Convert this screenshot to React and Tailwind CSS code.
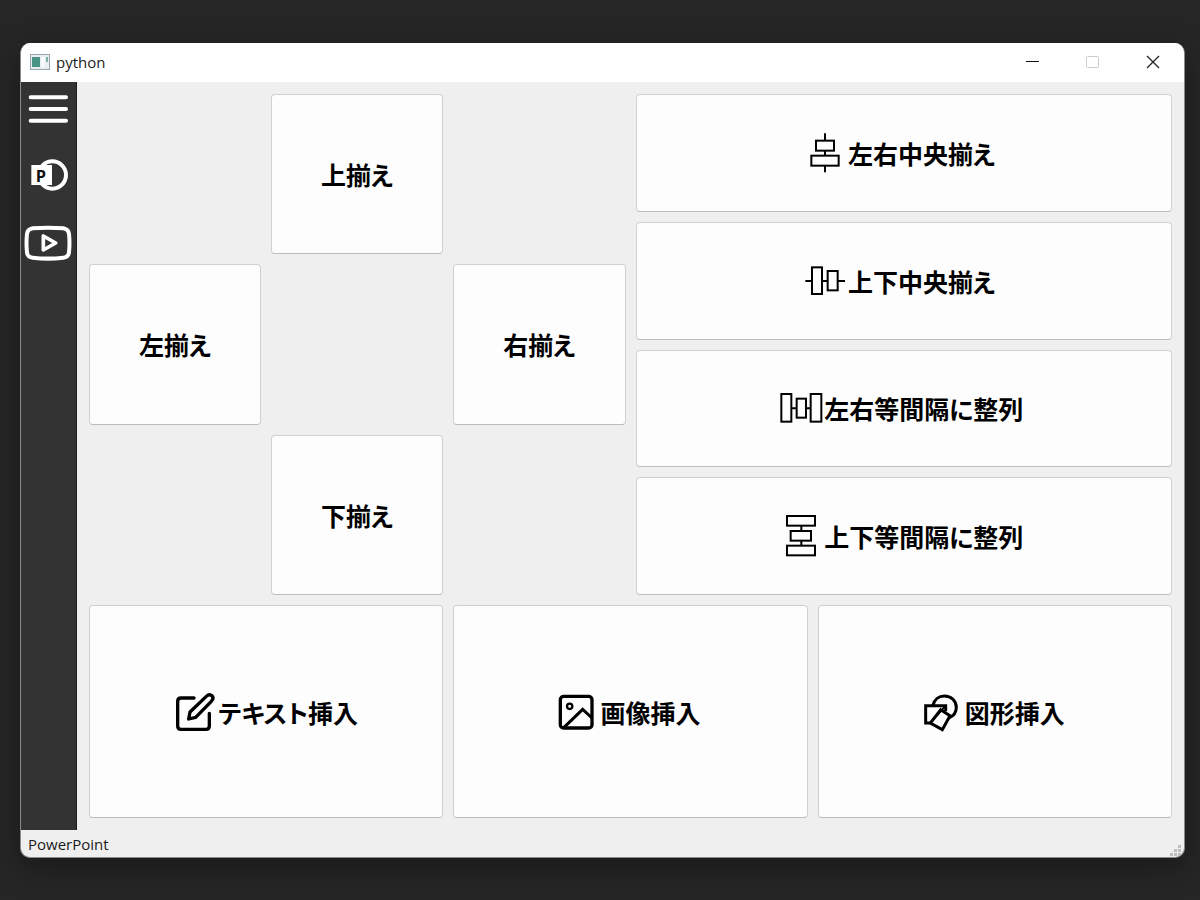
import React from 'react';

const ICON_CLASS = 'size-[42px] shrink-0 overflow-visible';

function AlignCenterHIcon() {
  return (
    <svg className={ICON_CLASS} viewBox="41 36 126 126" fill="none" stroke="#000" strokeWidth="6" aria-hidden="true">
      <path d="M104 40V61M104 92V107M104 137V157" />
      <rect x="77" y="62" width="54" height="30" />
      <rect x="63" y="107" width="82" height="30" />
    </svg>
  );
}

function AlignCenterVIcon() {
  return (
    <svg className={ICON_CLASS} viewBox="44 28 126 126" fill="none" stroke="#000" strokeWidth="6" aria-hidden="true">
      <path d="M48 91H68M98 91H115M145 91H167" />
      <rect x="68" y="50" width="30" height="80" />
      <rect x="115" y="61" width="30" height="58" />
    </svg>
  );
}

function DistributeHIcon() {
  return (
    <svg className={ICON_CLASS} viewBox="28 23 126 126" fill="none" stroke="#000" strokeWidth="6" aria-hidden="true">
      <path d="M62 87H78M106 87H120" />
      <rect x="32" y="44" width="30" height="83" />
      <rect x="78" y="58" width="28" height="57" />
      <rect x="120" y="44" width="32" height="83" />
    </svg>
  );
}

function DistributeVIcon() {
  return (
    <svg className={ICON_CLASS} viewBox="29 30 126 126" fill="none" stroke="#000" strokeWidth="6" aria-hidden="true">
      <path d="M93 62V78M93 107V122" />
      <rect x="50" y="33" width="84" height="29" />
      <rect x="61" y="78" width="61" height="29" />
      <rect x="50" y="122" width="84" height="29" />
    </svg>
  );
}

function EditIcon() {
  return (
    <svg
      className={ICON_CLASS}
      viewBox="34 32 126 126"
      fill="none"
      stroke="#000"
      strokeWidth="10"
      strokeLinecap="round"
      strokeLinejoin="round"
      aria-hidden="true"
    >
      <path d="M94 53H55Q45 53 45 63V137Q45 147 55 147H130Q140 147 140 137V99" />
      <path d="M78 116L82 95L131 48Q140 39 148 46Q155 54 146 63L99 111Z" />
    </svg>
  );
}

function ImageIcon() {
  return (
    <svg className={ICON_CLASS} viewBox="30 31 126 126" fill="none" stroke="#000" strokeWidth="10" aria-hidden="true">
      <rect x="43" y="47" width="95" height="95" rx="10" />
      <circle cx="71" cy="77" r="8" strokeWidth="7" />
      <path d="M54 140L110 86L138 112" strokeWidth="9" />
    </svg>
  );
}

function ShapesIcon() {
  return (
    <svg className={ICON_CLASS} viewBox="30 31 126 126" fill="none" stroke="#000" strokeWidth="9" aria-hidden="true">
      <path d="M66 74C70 56 84 46 100 46C121 46 136 61 136 80C136 95 127 107 113 112" />
      <path d="M62 127H44V75H104V92" />
      <path d="M89 87L117 105L94 147L58 127Z" />
      <path d="M104 75L58 127" strokeWidth="6" />
    </svg>
  );
}

function MenuIcon() {
  return (
    <svg className="h-[46px] w-14" viewBox="63 168 168 138" stroke="#fff" strokeWidth="12" strokeLinecap="round" aria-hidden="true">
      <path d="M92 202H198M92 237H198M92 272H198" />
    </svg>
  );
}

function PowerPointIcon() {
  return (
    <svg className="h-[46px] w-14" viewBox="15 39 168 138" aria-hidden="true">
      <circle cx="109" cy="105" r="41" fill="none" stroke="#fff" strokeWidth="12" />
      <path d="M46 75H108V135H46Z" fill="#fff" />
      <text x="59" y="126" fontSize="49" fontWeight="700" fontFamily="'Open Sans', sans-serif" fill="#111">
        P
      </text>
    </svg>
  );
}

function VideoIcon() {
  return (
    <svg className="h-[46px] w-14" viewBox="15 240 168 138" fill="none" stroke="#fff" strokeLinejoin="round" aria-hidden="true">
      <path
        d="M96 263C118 263 132 264 142 265C153 267 158 273 159 282C161 300 161 318 159 337C158 347 153 352 142 353C118 356 74 356 50 353C39 352 34 347 33 337C31 318 31 300 33 282C34 273 39 267 50 265C60 264 74 263 96 263Z"
        strokeWidth="12"
      />
      <path d="M82 288V330L119 309Z" strokeWidth="11" />
    </svg>
  );
}

function ActionButton({ icon, label, className = '' }) {
  return (
    <button
      type="button"
      className={`flex items-center justify-center gap-[2px] rounded-[4px] border border-[#d0d0d0] border-b-[#bcbcbc] bg-[#fdfdfd] text-[25px] leading-8 font-bold text-black ${className}`}
    >
      {icon}
      <span className="pt-[2px] [font-feature-settings:'palt']">{label}</span>
    </button>
  );
}

function TitleBar() {
  return (
    <header className="flex h-[39px] shrink-0 items-center bg-white pb-[2px] pl-[9px]">
      <svg className="h-4 w-5" viewBox="0 0 20 16" aria-hidden="true">
        <rect x="0.5" y="0.5" width="19" height="15" fill="#e9eef2" stroke="#9aa5ad" />
        <rect x="2" y="3" width="8" height="10" fill="#4a9484" />
        <rect x="11" y="3" width="4" height="10" fill="#f7fafc" />
        <rect x="16" y="3" width="2" height="5" fill="#7fb0a8" />
      </svg>
      <h1 className="flex-1 pl-[6px] text-[15px] leading-5">python</h1>
      <div className="flex h-full pr-px">
        <button type="button" aria-label="Minimize" className="flex w-[60px] items-center justify-center">
          <svg className="size-[14px]" viewBox="0 0 14 14" stroke="#111" aria-hidden="true">
            <path d="M0 6.5H13" />
          </svg>
        </button>
        <button type="button" aria-label="Maximize" disabled className="flex w-[60px] items-center justify-center">
          <svg className="size-[14px]" viewBox="0 0 14 14" fill="none" stroke="#cccccc" aria-hidden="true">
            <rect x="0.5" y="1.5" width="12" height="11" rx="1" />
          </svg>
        </button>
        <button type="button" aria-label="Close" className="flex w-[60px] items-center justify-center">
          <svg className="size-[14px]" viewBox="0 0 14 14" stroke="#222" strokeWidth="1.3" aria-hidden="true">
            <path d="M1 1L13 13M13 1L1 13" />
          </svg>
        </button>
      </div>
    </header>
  );
}

function Sidebar() {
  return (
    <nav className="flex w-14 shrink-0 flex-col gap-[21px] border-r border-[#1c1c1c] bg-[#333333] pt-1">
      <button type="button" aria-label="Menu">
        <MenuIcon />
      </button>
      <button type="button" aria-label="PowerPoint">
        <PowerPointIcon />
      </button>
      <button type="button" aria-label="YouTube">
        <VideoIcon />
      </button>
    </nav>
  );
}

function StatusBar() {
  return (
    <footer className="flex h-[27px] shrink-0 items-center justify-between pl-[7px] pr-[2px] text-[15px] leading-5">
      <span>PowerPoint</span>
      <svg className="size-3 self-end" viewBox="0 0 12 12" fill="#bdbdbd" aria-hidden="true">
        <path d="M8 0h3v3h-3zM4 4h3v3h-3zM8 4h3v3h-3zM0 8h3v3h-3zM4 8h3v3h-3zM8 8h3v3h-3z" />
      </svg>
    </footer>
  );
}

function App() {
  return (
    <div className="flex min-h-screen flex-col bg-[#262626] pt-[43px] pr-[15px] pb-[42px] pl-5 font-['Open_Sans','Noto_Sans_CJK_JP',sans-serif] text-[#1a1a1a]">
      <div className="flex flex-1 flex-col overflow-hidden rounded-[10px] border border-t-0 border-[#8a8a8a] bg-[#efefef] shadow-[0_10px_30px_rgba(0,0,0,0.35)]">
        <TitleBar />
        <div className="flex flex-1">
          <Sidebar />
          <main className="flex flex-1 flex-col gap-[10px] p-3">
            <div className="grid flex-[501] grid-cols-2 gap-[10px]">
              <div className="grid grid-cols-3 grid-rows-3 gap-[10px]">
                <ActionButton label="上揃え" className="col-start-2 row-start-1" />
                <ActionButton label="左揃え" className="col-start-1 row-start-2" />
                <ActionButton label="右揃え" className="col-start-3 row-start-2" />
                <ActionButton label="下揃え" className="col-start-2 row-start-3" />
              </div>
              <div className="grid grid-rows-4 gap-[10px]">
                <ActionButton icon={<AlignCenterHIcon />} label="左右中央揃え" className="pr-2" />
                <ActionButton icon={<AlignCenterVIcon />} label="上下中央揃え" className="pr-2" />
                <ActionButton icon={<DistributeHIcon />} label="左右等間隔に整列" className="pr-1" />
                <ActionButton icon={<DistributeVIcon />} label="上下等間隔に整列" className="pr-1" />
              </div>
            </div>
            <div className="grid flex-[213] grid-cols-3 gap-[10px]">
              <ActionButton icon={<EditIcon />} label="テキスト挿入" />
              <ActionButton icon={<ImageIcon />} label="画像挿入" className="pr-1" />
              <ActionButton icon={<ShapesIcon />} label="図形挿入" className="pr-1" />
            </div>
          </main>
        </div>
        <StatusBar />
      </div>
    </div>
  );
}

export default App;
